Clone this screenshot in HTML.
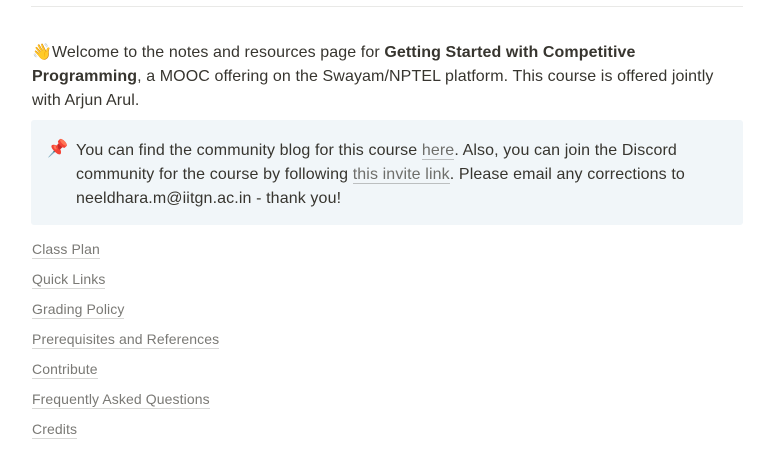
<!DOCTYPE html>
<html><head><style>
body{margin:0;background:#fff;font-family:"Liberation Sans",sans-serif;color:#37352f;width:765px;height:464px;overflow:hidden;position:relative}
.hr{position:absolute;left:31px;top:6px;width:712px;height:1px;background:#e9e9e7}
.p{position:absolute;left:32px;top:41px;width:720px;font-size:16px;line-height:24px;letter-spacing:0.1px;white-space:nowrap}
.call{position:absolute;left:31px;top:120px;width:712px;height:105px;background:#f1f6f9;border-radius:3px}
.pin{position:absolute;left:16px;top:19px;font-size:17px;color:#d33}
.ct{position:absolute;left:45px;top:19px;width:660px;font-size:16px;line-height:24px;letter-spacing:0.12px;white-space:nowrap}
a{color:inherit;text-decoration:none;border-bottom:1px solid rgba(55,53,47,.4)}
.ct a{opacity:.7}
.toc{position:absolute;left:32px;top:234px;font-size:14px;line-height:30px;letter-spacing:0.1px}
.toc div{height:30px}
.toc a{color:#7a7975;border-bottom:1px solid #d8d8d6;padding-bottom:1px}
</style></head><body>
<div class="hr"></div>
<div class="p">👋Welcome to the notes and resources page for <b>Getting Started with Competitive<br>Programming</b>, a MOOC offering on the Swayam/NPTEL platform. This course is offered jointly<br>with Arjun Arul.</div>
<div class="call"><div class="pin">📌</div><div class="ct">You can find the community blog for this course <a>here</a>. Also, you can join the Discord<br>community for the course by following <a>this invite link</a>. Please email any corrections to<br>neeldhara.m@iitgn.ac.in - thank you!</div></div>
<div class="toc">
<div><a>Class Plan</a></div>
<div><a>Quick Links</a></div>
<div><a>Grading Policy</a></div>
<div><a>Prerequisites and References</a></div>
<div><a>Contribute</a></div>
<div><a>Frequently Asked Questions</a></div>
<div><a>Credits</a></div>
</div>
</body></html>
